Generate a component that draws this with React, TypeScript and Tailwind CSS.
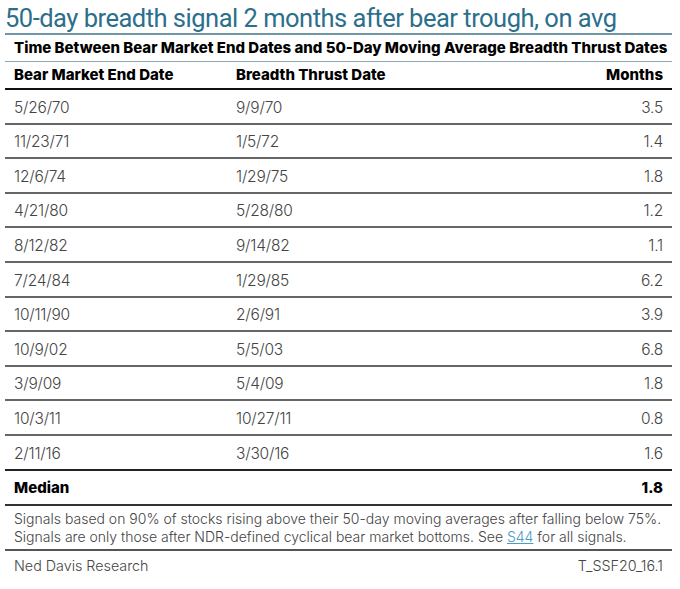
const rows: [string, string, string][] = [
  ["5/26/70", "9/9/70", "3.5"],
  ["11/23/71", "1/5/72", "1.4"],
  ["12/6/74", "1/29/75", "1.8"],
  ["4/21/80", "5/28/80", "1.2"],
  ["8/12/82", "9/14/82", "1.1"],
  ["7/24/84", "1/29/85", "6.2"],
  ["10/11/90", "2/6/91", "3.9"],
  ["10/9/02", "5/5/03", "6.8"],
  ["3/9/09", "5/4/09", "1.8"],
  ["10/3/11", "10/27/11", "0.8"],
  ["2/11/16", "3/30/16", "1.6"],
];

export default function App() {
  return (
    <div className="w-[680px] h-[589px] bg-white overflow-hidden font-['Inter',sans-serif] text-[#444]">
      <div className="px-[5px] pr-[8px]">
        <div className="h-[35px] flex items-start pt-[3px] border-b-2 border-[#6f97a6]">
          <h1 className="font-['Roboto',sans-serif] text-[25.5px] leading-[30px] text-[#2c6f8b] tracking-[-0.5px]">
            50-day breadth signal 2 months after bear trough, on avg
          </h1>
        </div>
        <div className="h-[27px] flex items-center pt-[1px] px-[9px] border-b-[1.5px] border-[#8aa7b2]">
          <span className="text-[15px] font-extrabold text-black whitespace-nowrap">
            Time Between Bear Market End Dates and 50-Day Moving Average Breadth Thrust Dates
          </span>
        </div>
        <div className="h-[28px] flex items-center pt-[1px] px-[9px] border-b-2 border-[#111] text-[15px] font-extrabold text-black">
          <span className="w-[222px]">Bear Market End Date</span>
          <span className="flex-1">Breadth Thrust Date</span>
          <span>Months</span>
        </div>
        {rows.map((r, i) => (
          <div
            key={i}
            className={
              i === rows.length - 1
                ? "h-[34.6px] flex items-center pt-[2px] px-[9px] border-b-2 border-[#222] text-[15.5px] font-light text-[#444] tracking-[-0.2px]"
                : "h-[34.6px] flex items-center pt-[2px] px-[9px] border-b-2 border-[#666] text-[15.5px] font-light text-[#444] tracking-[-0.2px]"
            }
          >
            <span className="w-[222px]">{r[0]}</span>
            <span className="flex-1">{r[1]}</span>
            <span>{r[2]}</span>
          </div>
        ))}
        <div className="h-[35px] flex items-center pt-[2px] px-[9px] border-b-2 border-[#333] text-[15px] font-extrabold text-black">
          <span className="flex-1">Median</span>
          <span>1.8</span>
        </div>
        <div className="h-[45px] flex flex-col justify-center pt-[1px] px-[9px] border-b-2 border-[#555] text-[14px] leading-[18px] font-light text-[#444] whitespace-nowrap">
          <span>Signals based on 90% of stocks rising above their 50-day moving averages after falling below 75%.</span>
          <span>
            Signals are only those after NDR-defined cyclical bear market bottoms. See{" "}
            <span className="text-[#4a9cc4] underline">S44</span> for all signals.
          </span>
        </div>
        <div className="h-[30px] flex items-center px-[9px] text-[14.3px] font-light text-[#444]">
          <span className="flex-1">Ned Davis Research</span>
          <span>T_SSF20_16.1</span>
        </div>
      </div>
    </div>
  );
}
